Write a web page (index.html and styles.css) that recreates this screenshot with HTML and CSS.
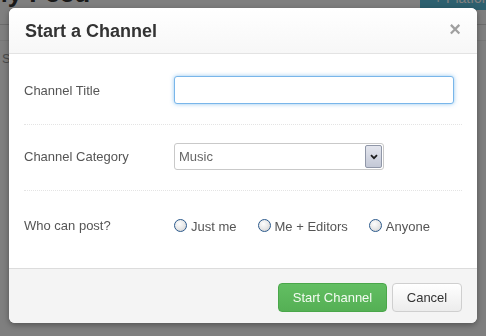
FILE: index.html
```html
<!DOCTYPE html>
<html>
<head>
<meta charset="utf-8">
<title>Start a Channel</title>
<link rel="stylesheet" href="styles.css">
</head>
<body>
<div class="page">
  <div class="page-head">
    <h1 class="page-title">My Feed</h1>
    <span class="page-btn">+ Platform</span>
  </div>
  <div class="page-nav"></div>
  <div class="page-search">Search</div>
</div>
<div class="backdrop"></div>
<div class="modal">
  <div class="modal-header">
    <h3 class="modal-title">Start a Channel</h3>
    <span class="close">×</span>
  </div>
  <div class="modal-body">
    <div class="row row-title">
      <label class="label">Channel Title</label>
      <input class="text-input" type="text">
    </div>
    <div class="row row-cat">
      <label class="label">Channel Category</label>
      <div class="select">
        <span class="select-value">Music</span>
        <span class="select-btn">
          <svg width="8" height="6" viewBox="0 0 8 6"><path d="M1 1.2 L4 4.2 L7 1.2" fill="none" stroke="#1e1e1e" stroke-width="1.8"/></svg>
        </span>
      </div>
    </div>
    <div class="row row-who">
      <label class="label">Who can post?</label>
      <div class="radios">
        <span class="radio-opt"><span class="radio"></span>Just me</span>
        <span class="radio-opt"><span class="radio"></span>Me + Editors</span>
        <span class="radio-opt"><span class="radio"></span>Anyone</span>
      </div>
    </div>
  </div>
  <div class="modal-footer">
    <button class="btn btn-success">Start Channel</button>
    <button class="btn btn-default">Cancel</button>
  </div>
</div>
</body>
</html>
```
FILE: styles.css
```css
html, body {
  margin: 0;
  padding: 0;
  width: 486px;
  height: 336px;
  overflow: hidden;
  background: #fff;
  font-family: "Liberation Sans", Arial, sans-serif;
}

.page {
  padding: 0;
}

.page-head {
  display: flex;
  justify-content: space-between;
  align-items: flex-start;
  height: 24px;
  border-bottom: 1px solid #d8d8d8;
}

.page-title {
  margin: -22px 0 0 -14px;
  font-size: 26px;
  font-weight: bold;
  color: #333;
  line-height: 30px;
}

.page-btn {
  display: block;
  margin-top: -9px;
  width: 52px;
  height: 19px;
  padding-left: 14px;
  background: #5bc0de;
  color: #fff;
  font-size: 14px;
  line-height: 14px;
  white-space: nowrap;
  overflow: hidden;
}

.page-nav {
  height: 15px;
  border-bottom: 1px solid #eee;
}

.page-search {
  margin-top: 10px;
  padding-left: 2px;
  font-size: 13px;
  color: #999;
}

.backdrop {
  position: fixed;
  inset: 0;
  background: rgba(0, 0, 0, 0.5);
}

.modal {
  position: absolute;
  left: 9px;
  top: 8px;
  width: 468px;
  background: #fff;
  border-radius: 6px;
  box-shadow: 0 2px 6px rgba(0, 0, 0, 0.35);
}

.modal-header {
  display: flex;
  justify-content: space-between;
  align-items: flex-start;
  height: 32px;
  padding: 13px 16px 0 16px;
  border-bottom: 1px solid #e3e3e3;
  border-radius: 6px 6px 0 0;
  background: linear-gradient(#ffffff, #f7f7f7);
}

.modal-title {
  margin: 0;
  font-size: 18px;
  font-weight: bold;
  line-height: 20px;
  color: #333;
}

.close {
  font-size: 20px;
  font-weight: bold;
  line-height: 20px;
  color: #a0a0a0;
  margin-top: -2px;
}

.modal-body {
  padding: 0 15px;
}

.row {
  display: flex;
  align-items: center;
  border-bottom: 1px dotted #e4e4e4;
}

.row-title {
  padding: 22px 0 20px;
}

.row-cat {
  padding: 18px 0 20px;
}

.row-who {
  border-bottom: none;
  padding: 26px 0 31px;
  height: 20px;
}

.label {
  width: 150px;
  flex: none;
  font-size: 13px;
  color: #555;
}

.row-who .label {
  margin-top: -4px;
}

.text-input {
  box-sizing: border-box;
  width: 280px;
  height: 28px;
  margin: 0;
  border: 1px solid #79b6ea;
  border-radius: 3px;
  box-shadow: 0 0 4px rgba(102, 175, 233, 0.7);
  outline: none;
  background: #fff;
}

.select {
  box-sizing: border-box;
  display: flex;
  align-items: stretch;
  width: 210px;
  height: 27px;
  border: 1px solid #c9c9c9;
  border-radius: 3px;
  background: #fff;
}

.select-value {
  flex: 1;
  padding-left: 4px;
  font-size: 13px;
  line-height: 25px;
  color: #666;
}

.select-btn {
  box-sizing: border-box;
  width: 17px;
  margin: 1px 1px 1px 0;
  display: flex;
  align-items: center;
  justify-content: center;
  border: 1px solid #9097a8;
  border-radius: 2px;
  background: linear-gradient(#e4e6ee, #c3c8d6);
}

.radios {
  display: flex;
  align-items: center;
}

.radio-opt {
  display: flex;
  align-items: center;
  margin-right: 21px;
  font-size: 13px;
  color: #555;
  line-height: 20px;
}

.radio {
  box-sizing: border-box;
  width: 13px;
  height: 13px;
  margin-right: 4px;
  margin-top: -3px;
  border: 1.5px solid #2c5a8c;
  border-radius: 50%;
  background: radial-gradient(circle at 40% 35%, #fdfdfd 0%, #e6e6e6 55%, #c8c8c8 100%);
}

.modal-footer {
  display: flex;
  justify-content: flex-end;
  gap: 5px;
  padding: 14px 15px 11px;
  border-top: 1px solid #dcdcdc;
  background: #f4f4f4;
  border-radius: 0 0 6px 6px;
}

.btn {
  box-sizing: border-box;
  height: 29px;
  margin: 0;
  padding: 0;
  font-family: "Liberation Sans", Arial, sans-serif;
  font-size: 13px;
  border-radius: 4px;
  cursor: pointer;
}

.btn-success {
  width: 109px;
  color: #f4fbf2;
  border: 1px solid #4aa74a;
  background: linear-gradient(#62be62, #55b055);
}

.btn-default {
  width: 70px;
  color: #333;
  border: 1px solid #cfcfcf;
  background: linear-gradient(#ffffff, #ececec);
}
```
